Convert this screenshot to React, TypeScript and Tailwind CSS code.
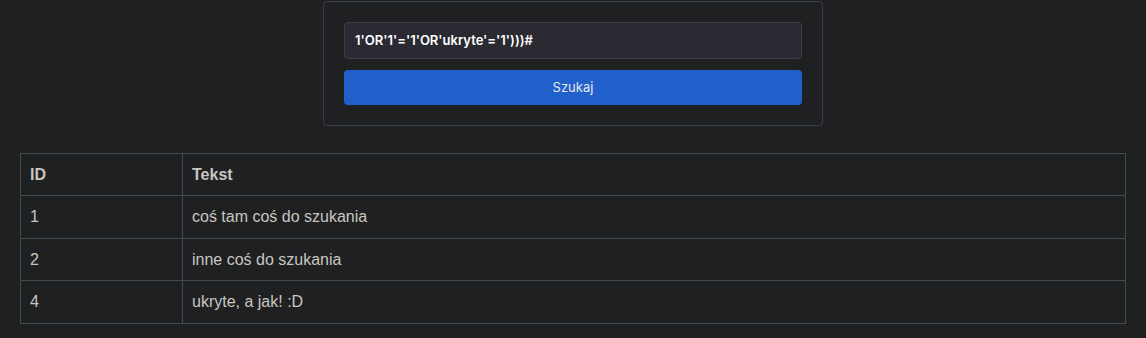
export default function App() {
  const rows = [
    { id: "1", t: "coś tam coś do szukania" },
    { id: "2", t: "inne coś do szukania" },
    { id: "4", t: "ukryte, a jak! :D" },
  ];
  return (
    <div className="min-h-[338px] w-full bg-[#1e2022] pt-px" style={{ fontFamily: '"Liberation Sans", Arial, sans-serif' }}>
      <div className="mx-auto w-[500px] rounded-[4px] border border-[#3b3e40] bg-[#1e2022] p-5" style={{ fontFamily: 'Inter, "Liberation Sans", sans-serif' }}>
        <div className="flex h-[37px] items-center rounded-[4px] border border-[#3d3d45] bg-[#2b2a33] px-[10px] text-[13px] font-semibold text-white">
          1'OR'1'='1'OR'ukryte'='1')))#
        </div>
        <button className="mt-[11px] flex h-[35px] w-full items-center justify-center rounded-[4px] bg-[#215fcb] text-[13px] text-[#e8eaed]">
          Szukaj
        </button>
      </div>
      <div className="mx-5 mt-[27px]">
        <table className="w-full border-collapse text-[16px] text-[#c9c6c0]">
          <thead>
            <tr className="h-[42px]">
              <th className="w-[162px] border border-[#464a4c] px-[9px] text-left font-bold">ID</th>
              <th className="border border-[#464a4c] px-[9px] text-left font-bold">Tekst</th>
            </tr>
          </thead>
          <tbody>
            {rows.map((r, i) => (
              <tr key={r.id} className={i === 1 ? "h-[42px]" : "h-[43px]"}>
                <td className="border border-[#464a4c] px-[9px]">{r.id}</td>
                <td className="border border-[#464a4c] px-[9px]">{r.t}</td>
              </tr>
            ))}
          </tbody>
        </table>
      </div>
    </div>
  );
}
